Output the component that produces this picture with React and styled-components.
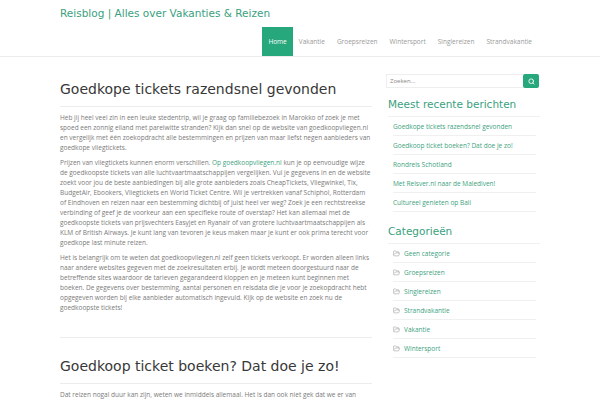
import styled, { createGlobalStyle } from "styled-components";
import { Search, FolderOpen } from "lucide-react";

const GREEN = "#26a77c";
const LINK = "#3d9f80";

const GlobalStyle = createGlobalStyle`
  body {
    margin: 0;
    background: #fff;
    font-family: "Open Sans", "Liberation Sans", sans-serif;
  }
  * { box-sizing: border-box; }
`;

const navItems = ["Home", "Vakantie", "Groepsreizen", "Wintersport", "Singlereizen", "Strandvakantie"];

const recent = [
  "Goedkope tickets razendsnel gevonden",
  "Goedkoop ticket boeken? Dat doe je zo!",
  "Rondreis Schotland",
  "Met Reisver.nl naar de Malediven!",
  "Cultureel genieten op Bali",
];

const categories = ["Geen categorie", "Groepsreizen", "Singlereizen", "Strandvakantie", "Vakantie", "Wintersport"];

function App() {
  return (
    <>
      <GlobalStyle />
      <Header>
        <Container>
          <SiteTitle>Reisblog | Alles over Vakanties &amp; Reizen</SiteTitle>
          <Nav>
            {navItems.map((item, i) => (
              <NavItem key={item} active={i === 0}>{item}</NavItem>
            ))}
          </Nav>
        </Container>
      </Header>
      <Container>
        <Layout>
          <Main>
            <Article>
              <PostTitle>Goedkope tickets razendsnel gevonden</PostTitle>
              <Text>
                Heb jij heel veel zin in een leuke stedentrip, wil je graag op familiebezoek in Marokko of zoek je met spoed een zonnig eiland met parelwitte stranden? Kijk dan snel op de website van goedkoopvliegen.nl en vergelijk met één zoekopdracht alle bestemmingen en prijzen van maar liefst negen aanbieders van goedkope vliegtickets.
              </Text>
              <Text>
                Prijzen van vliegtickets kunnen enorm verschillen. <Link>Op goedkoopvliegen.nl</Link> kun je op eenvoudige wijze de goedkoopste tickets van alle luchtvaartmaatschappijen vergelijken. Vul je gegevens in en de website zoekt voor jou de beste aanbiedingen bij alle grote aanbieders zoals CheapTickets, Vliegwinkel, Tix, BudgetAir, Ebookers, Vliegtickets en World Ticket Centre. Wil je vertrekken vanaf Schiphol, Rotterdam of Eindhoven en reizen naar een bestemming dichtbij of juist heel ver weg? Zoek je een rechtstreekse verbinding of geef je de voorkeur aan een specifieke route of overstap? Het kan allemaal met de goedkoopste tickets van prijsvechters Easyjet en Ryanair of van grotere luchtvaartmaatschappijen als KLM of British Airways. Je kunt lang van tevoren je keus maken maar je kunt er ook prima terecht voor goedkope last minute reizen.
              </Text>
              <Text>
                Het is belangrijk om te weten dat goedkoopvliegen.nl zelf geen tickets verkoopt. Er worden alleen links naar andere websites gegeven met de zoekresultaten erbij. Je wordt meteen doorgestuurd naar de betreffende sites waardoor de tarieven gegarandeerd kloppen en je meteen kunt beginnen met boeken. De gegevens over bestemming, aantal personen en reisdata die je voor je zoekopdracht hebt opgegeven worden bij elke aanbieder automatisch ingevuld. Kijk op de website en zoek nu de goedkoopste tickets!
              </Text>
            </Article>
            <Article bordered>
              <PostTitle>Goedkoop ticket boeken? Dat doe je zo!</PostTitle>
              <Text>
                Dat reizen nogal duur kan zijn, weten we inmiddels allemaal. Het is dan ook niet gek dat we er van genieten om zo goedkoop mogelijk op reis te gaan.
              </Text>
            </Article>
          </Main>
          <Sidebar>
            <SearchForm>
              <SearchInput placeholder="Zoeken..." />
              <SearchButton>
                <Search size={7} strokeWidth={3} color="#fff" />
              </SearchButton>
            </SearchForm>
            <Widget>
              <WidgetTitle>Meest recente berichten</WidgetTitle>
              <List>
                {recent.map((r) => (
                  <ListItem key={r}>{r}</ListItem>
                ))}
              </List>
            </Widget>
            <Widget>
              <WidgetTitle>Categorieën</WidgetTitle>
              <List>
                {categories.map((c) => (
                  <ListItem key={c}>
                    <FolderOpen size={7} color="#888" strokeWidth={1.6} />
                    {c}
                  </ListItem>
                ))}
              </List>
            </Widget>
          </Sidebar>
        </Layout>
      </Container>
    </>
  );
}

export default App;

const Header = styled.header`
  height: 57px;
  border-bottom: 1px solid #ececec;
`;

const Container = styled.div`
  width: 480px;
  margin: 0 auto;
`;

const SiteTitle = styled.div`
  padding-top: 7px;
  height: 27px;
  font-family: "DejaVu Sans", sans-serif;
  font-size: 10.5px;
  line-height: 12px;
  color: #3a9f7e;
`;

const Nav = styled.nav`
  display: flex;
  justify-content: flex-end;
  padding-right: 2px;
`;

const NavItem = styled.a`
  height: 29px;
  display: flex;
  align-items: center;
  padding: 0 6px;
  font-size: 6.5px;
  color: ${(p) => (p.active ? "#fff" : "#9a9a9a")};
  background: ${(p) => (p.active ? GREEN : "transparent")};
`;

const Layout = styled.div`
  display: flex;
  gap: 14px;
`;

const Main = styled.main`
  width: 312px;
  padding-top: 24px;
`;

const Article = styled.article`
  padding-bottom: 19px;
  border-top: ${(p) => (p.bordered ? "1px solid #ececec" : "none")};
  padding-top: ${(p) => (p.bordered ? "20px" : "0")};
`;

const PostTitle = styled.h1`
  margin: 0 0 6px;
  padding-bottom: 9px;
  border-bottom: 1px solid #ececec;
  font-family: "DejaVu Sans", sans-serif;
  font-weight: normal;
  font-size: 14px;
  line-height: 16px;
  color: #383838;
`;

const Text = styled.p`
  margin: 0 0 5px;
  font-size: 6.5px;
  line-height: 10px;
  color: #7a7a7a;
`;

const Link = styled.span`
  color: ${LINK};
`;

const Sidebar = styled.aside`
  width: 154px;
  padding-top: 17px;
`;

const SearchForm = styled.div`
  display: flex;
  height: 14px;
  margin-bottom: 9px;
`;

const SearchInput = styled.input`
  flex: 1;
  min-width: 0;
  height: 14px;
  border: 1px solid #eee;
  border-right: none;
  padding: 0 3px;
  font-family: "Open Sans", sans-serif;
  font-size: 6px;
  color: #777;
  outline: none;
  &::placeholder { color: #888; }
`;

const SearchButton = styled.button`
  width: 16px;
  height: 14px;
  margin-right: 1px;
  padding: 0;
  border: none;
  border-radius: 2px;
  background: ${GREEN};
  display: flex;
  align-items: center;
  justify-content: center;
`;

const Widget = styled.section`
  margin-bottom: 12px;
`;

const WidgetTitle = styled.h3`
  margin: 0 0 0 2px;
  padding-bottom: 5px;
  border-bottom: 1px solid #f0f0f0;
  font-family: "DejaVu Sans", sans-serif;
  font-weight: normal;
  font-size: 10.5px;
  line-height: 14px;
  color: #3a9f7e;
`;

const List = styled.ul`
  list-style: none;
  margin: 0;
  padding: 0 4px 0 7px;
`;

const ListItem = styled.li`
  height: 19px;
  display: flex;
  align-items: center;
  gap: 4px;
  border-bottom: 1px solid #f0f0f0;
  font-size: 6.5px;
  color: ${LINK};
`;
